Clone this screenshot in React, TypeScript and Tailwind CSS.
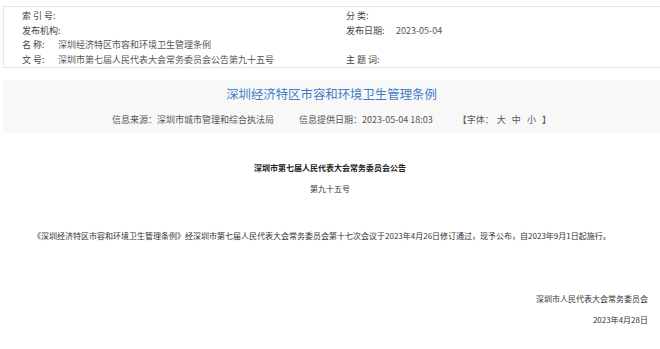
import React from 'react';

const font = { fontFamily: '"Microsoft YaHei", "Noto Sans CJK SC", "Noto Sans", sans-serif' };

interface MetaRow {
  label: string;
  value?: string;
}

const leftRows: MetaRow[] = [
  { label: '索 引 号:' },
  { label: '发布机构:' },
  { label: '名 称:', value: '深圳经济特区市容和环境卫生管理条例' },
  { label: '文 号:', value: '深圳市第七届人民代表大会常务委员会公告第九十五号' },
];

const rightRows: MetaRow[] = [
  { label: '分 类:' },
  { label: '发布日期:', value: '2023-05-04' },
  { label: '' },
  { label: '主 题 词:' },
];

const App: React.FC = () => {
  return (
    <div className="w-[660px] h-[349px] overflow-hidden bg-white text-[#333]" style={font}>
      {/* info table */}
      <div className="ml-[3px] mt-[6px] h-[62px] border-t border-b border-l border-[#e6e6e6] pt-[2px] flex text-[9px] leading-[14.5px] text-[#444]">
        <div className="w-[342px] pl-[18px]">
          {leftRows.map((row, i) => (
            <div key={i} className="flex h-[14.5px]">
              <span className="w-[36px] whitespace-pre shrink-0">{row.label}</span>
              <span className="text-[#555]">{row.value}</span>
            </div>
          ))}
        </div>
        <div className="flex-1">
          {rightRows.map((row, i) => (
            <div key={i} className="flex h-[14.5px]">
              <span className="w-[50px] whitespace-pre shrink-0">{row.label}</span>
              <span className="text-[#555]">{row.value}</span>
            </div>
          ))}
        </div>
      </div>

      {/* title block */}
      <div className="ml-[3px] mt-[12px] h-[53px] bg-[#f8f8f8] flex flex-col items-center">
        <div className="mt-[6px] text-[12.4px] leading-[16px] text-[#3d7bc7]">深圳经济特区市容和环境卫生管理条例</div>
        <div className="mt-[12px] flex items-center text-[9px] leading-[12px] text-[#555] gap-[25px]">
          <span>信息来源：深圳市城市管理和综合执法局</span>
          <span>信息提供日期：2023-05-04 18:03</span>
          <span className="flex">
            <span>【字体：</span>
            <span className="ml-[3px]">大</span>
            <span className="ml-[6px]">中</span>
            <span className="ml-[6px]">小</span>
            <span className="ml-[6px]">】</span>
          </span>
        </div>
      </div>

      {/* body */}
      <div className="text-[8px] leading-[12px]">
        <div className="mt-[29px] text-center font-bold text-[#222]">深圳市第七届人民代表大会常务委员会公告</div>
        <div className="mt-[9px] text-center text-[#333]">第九十五号</div>
        <p className="mt-[35px] pl-[33px] text-[#333]">
          《深圳经济特区市容和环境卫生管理条例》经深圳市第七届人民代表大会常务委员会第十七次会议于2023年4月26日修订通过，现予公布，自2023年9月1日起施行。
        </p>
        <div className="mt-[51px] pr-[12px] text-right text-[#333]">深圳市人民代表大会常务委员会</div>
        <div className="mt-[9px] pr-[12px] text-right text-[#333]">2023年4月28日</div>
      </div>
    </div>
  );
};

export default App;
